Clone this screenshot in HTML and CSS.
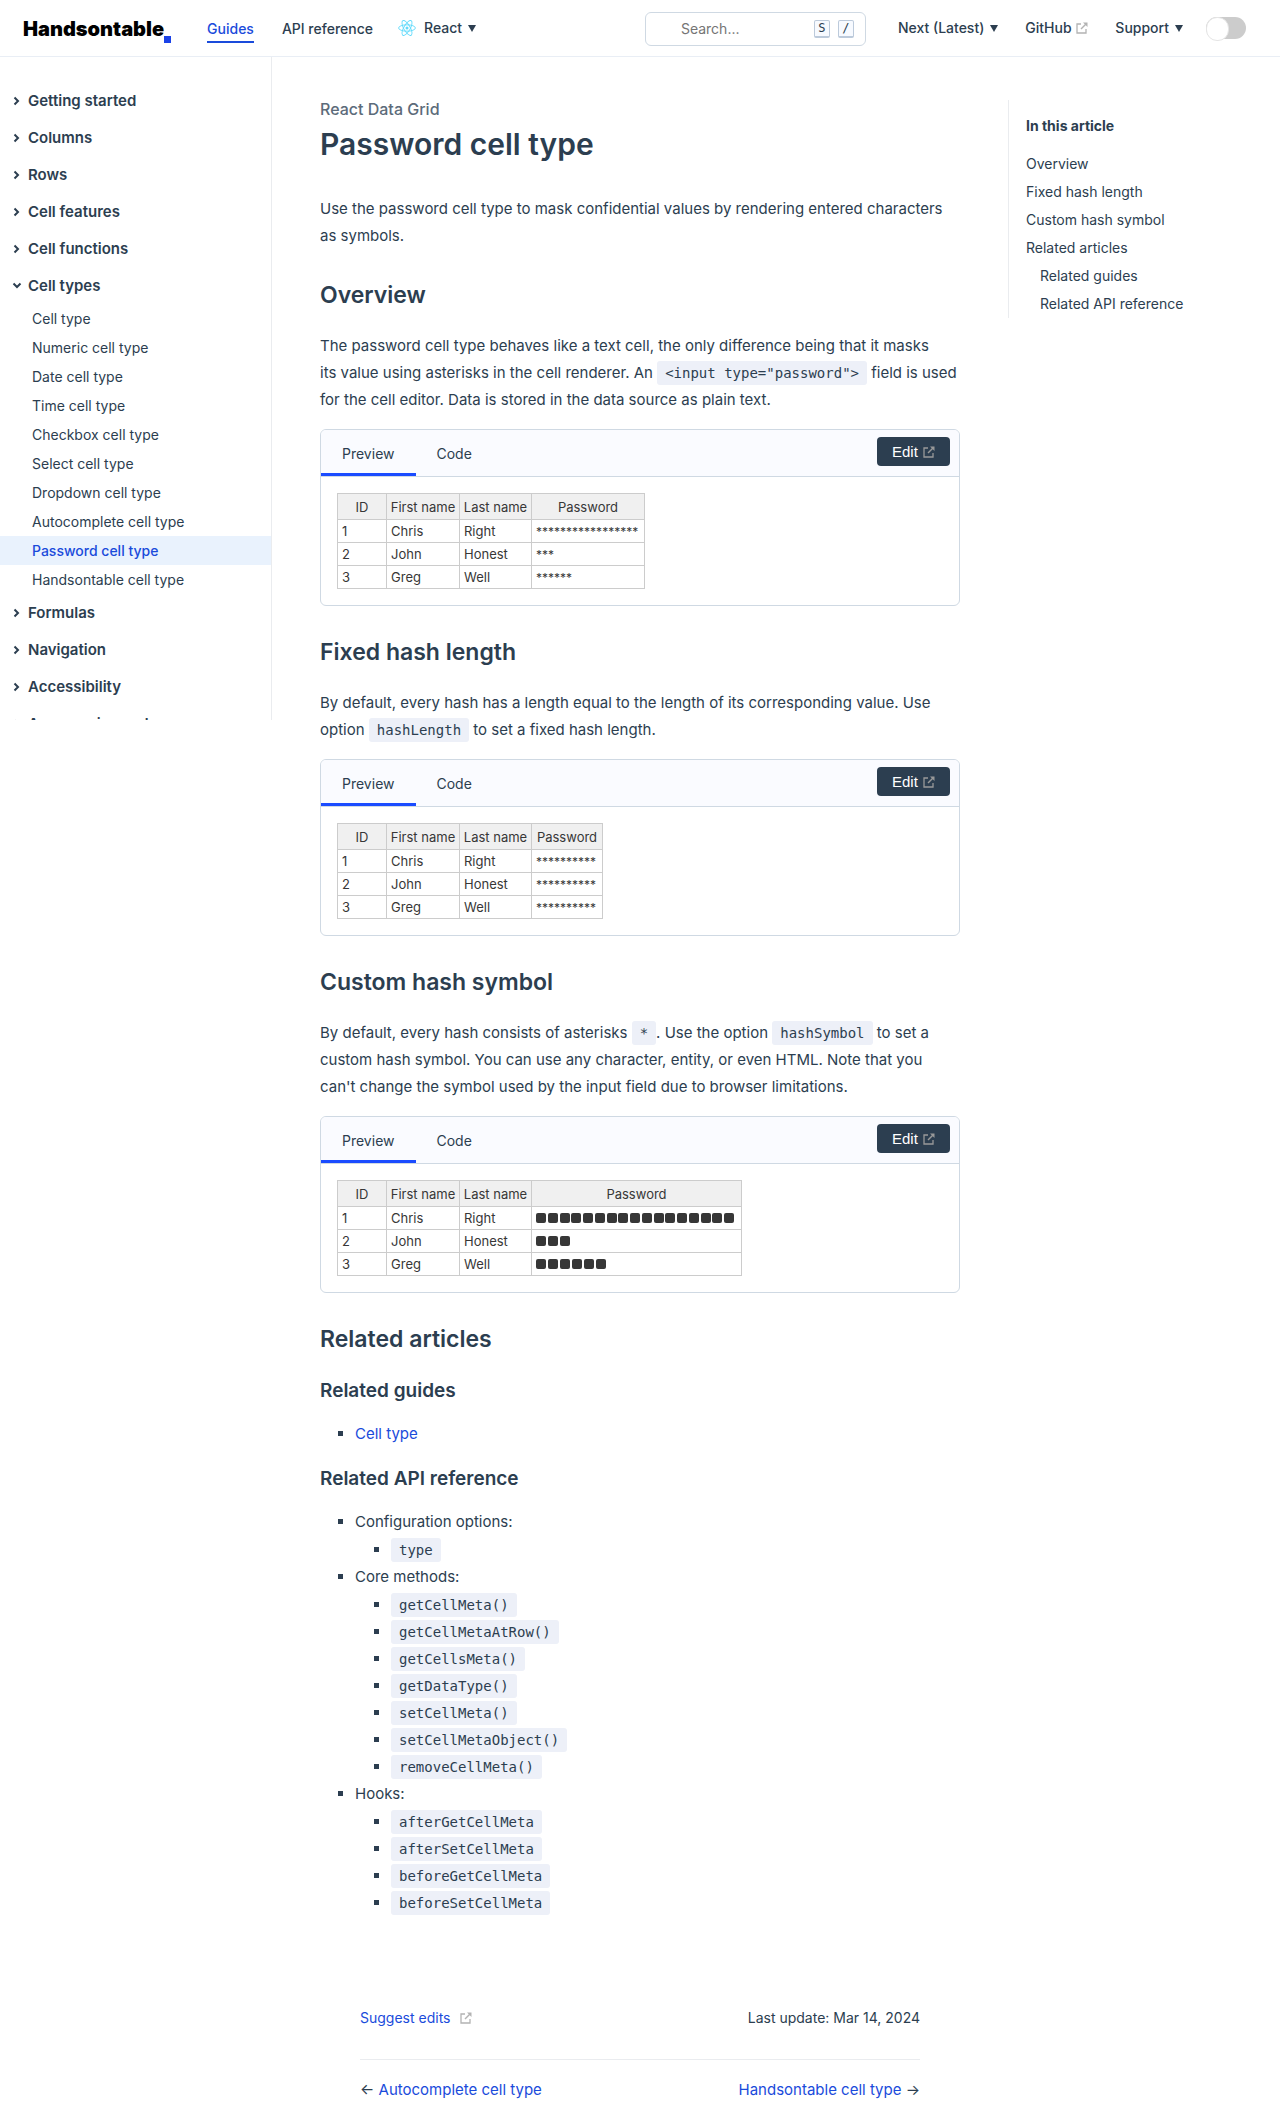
FILE: index.html
```html
<!DOCTYPE html>
<html lang="en">
<head>
<meta charset="utf-8">
<title>Password cell type - React Data Grid | Handsontable</title>
<meta name="viewport" content="width=device-width, initial-scale=1">
<link rel="stylesheet" href="styles.css">
</head>
<body>
<svg class="sprite" aria-hidden="true">
  <symbol id="ext" viewBox="0 0 12 12"><path d="M5 2H1V11H10V7" fill="none" stroke="currentColor" stroke-width="1.3"/><path d="M5 7L10.500 1.500" fill="none" stroke="currentColor" stroke-width="1.400"/><path d="M7 0.500H11.500V5Z" fill="currentColor"/></symbol>
  <symbol id="chev" viewBox="0 0 10 10"><path d="M2.500 1.500L6 5L2.500 8.500" fill="none" stroke="currentColor" stroke-width="2"/></symbol>
</svg>
<header class="topbar">
  <a class="logo" href="#">Handsontable<span class="logo-dot"></span></a>
  <nav class="nav-main">
    <a class="active" href="#">Guides</a>
    <a href="#">API reference</a>
    <button class="menu" type="button">
      <svg class="react" viewBox="0 0 18 20"><g fill="none" stroke="#61dafb" stroke-width="0.900"><ellipse cx="9" cy="10" rx="8.400" ry="3.200"/><ellipse cx="9" cy="10" rx="8.400" ry="3.200" transform="rotate(60 9 10)"/><ellipse cx="9" cy="10" rx="8.400" ry="3.200" transform="rotate(120 9 10)"/></g><circle cx="9" cy="10" r="1.500" fill="#61dafb"/></svg>
      React<span class="caret"></span></button>
  </nav>
  <div class="search">
    <input type="text" placeholder="Search..." aria-label="Search">
    <kbd>S</kbd><kbd>/</kbd>
  </div>
  <nav class="nav-side">
    <button class="menu" type="button">Next (Latest)<span class="caret"></span></button>
    <a href="#">GitHub <svg class="ext"><use href="#ext"/></svg></a>
    <button class="menu" type="button">Support<span class="caret"></span></button>
    <input class="toggle" type="checkbox" aria-label="Dark theme">
  </nav>
</header>
<div class="layout">
  <aside class="sidebar">
    <ul class="groups">
      <li><a href="#"><svg><use href="#chev"/></svg>Getting started</a></li>
      <li><a href="#"><svg><use href="#chev"/></svg>Columns</a></li>
      <li><a href="#"><svg><use href="#chev"/></svg>Rows</a></li>
      <li><a href="#"><svg><use href="#chev"/></svg>Cell features</a></li>
      <li><a href="#"><svg><use href="#chev"/></svg>Cell functions</a></li>
      <li class="open"><a href="#"><svg><use href="#chev"/></svg>Cell types</a>
        <ul class="pages">
          <li><a href="#">Cell type</a></li>
          <li><a href="#">Numeric cell type</a></li>
          <li><a href="#">Date cell type</a></li>
          <li><a href="#">Time cell type</a></li>
          <li><a href="#">Checkbox cell type</a></li>
          <li><a href="#">Select cell type</a></li>
          <li><a href="#">Dropdown cell type</a></li>
          <li><a href="#">Autocomplete cell type</a></li>
          <li><a class="current" href="#">Password cell type</a></li>
          <li><a href="#">Handsontable cell type</a></li>
        </ul>
      </li>
      <li><a href="#"><svg><use href="#chev"/></svg>Formulas</a></li>
      <li><a href="#"><svg><use href="#chev"/></svg>Navigation</a></li>
      <li><a href="#"><svg><use href="#chev"/></svg>Accessibility</a></li>
      <li><a href="#"><svg><use href="#chev"/></svg>Accessories and menus</a></li>
    </ul>
  </aside>
  <main class="content">
    <p class="framework">React Data Grid</p>
    <h1>Password cell type</h1>
    <p>Use the password cell type to mask confidential values by rendering entered characters as&nbsp;symbols.</p>

    <h2>Overview</h2>
    <p>The password cell type behaves like a text cell, the only difference being that it masks its&nbsp;value using asterisks in the cell renderer. An <code>&lt;input type="password"&gt;</code> field is used for&nbsp;the cell editor. Data is stored in the data source as plain text.</p>
    <section class="example">
      <div class="tabs"><button class="tab selected" type="button">Preview</button><button class="tab" type="button">Code</button><button class="edit" type="button">Edit <svg class="ext"><use href="#ext"/></svg></button></div>
      <table>
        <colgroup><col class="c-id"><col class="c-first"><col class="c-last"><col class="c-wide"></colgroup>
        <thead><tr><th>ID</th><th>First name</th><th>Last name</th><th>Password</th></tr></thead>
        <tbody>
          <tr><td>1</td><td>Chris</td><td>Right</td><td class="secret">*****************</td></tr>
          <tr><td>2</td><td>John</td><td>Honest</td><td class="secret">***</td></tr>
          <tr><td>3</td><td>Greg</td><td>Well</td><td class="secret">******</td></tr>
        </tbody>
      </table>
    </section>

    <h2>Fixed hash length</h2>
    <p>By default, every hash has a length equal to the length of its corresponding value. Use option <code>hashLength</code> to set a fixed hash length.</p>
    <section class="example">
      <div class="tabs"><button class="tab selected" type="button">Preview</button><button class="tab" type="button">Code</button><button class="edit" type="button">Edit <svg class="ext"><use href="#ext"/></svg></button></div>
      <table>
        <colgroup><col class="c-id"><col class="c-first"><col class="c-last"><col class="c-fixed"></colgroup>
        <thead><tr><th>ID</th><th>First name</th><th>Last name</th><th>Password</th></tr></thead>
        <tbody>
          <tr><td>1</td><td>Chris</td><td>Right</td><td class="secret">**********</td></tr>
          <tr><td>2</td><td>John</td><td>Honest</td><td class="secret">**********</td></tr>
          <tr><td>3</td><td>Greg</td><td>Well</td><td class="secret">**********</td></tr>
        </tbody>
      </table>
    </section>

    <h2>Custom hash symbol</h2>
    <p>By default, every hash consists of asterisks <code>*</code>. Use the option <code>hashSymbol</code> to set a custom hash symbol. You can use any character, entity, or even HTML. Note that you can't&nbsp;change the symbol used by the input field due to browser limitations.</p>
    <section class="example">
      <div class="tabs"><button class="tab selected" type="button">Preview</button><button class="tab" type="button">Code</button><button class="edit" type="button">Edit <svg class="ext"><use href="#ext"/></svg></button></div>
      <table>
        <colgroup><col class="c-id"><col class="c-first"><col class="c-last"><col class="c-custom"></colgroup>
        <thead><tr><th>ID</th><th>First name</th><th>Last name</th><th>Password</th></tr></thead>
        <tbody>
          <tr><td>1</td><td>Chris</td><td>Right</td><td><span class="hash full"><i></i><i></i><i></i><i></i><i></i><i></i><i></i><i></i><i></i><i></i><i></i><i></i><i></i><i></i><i></i><i></i><i></i></span></td></tr>
          <tr><td>2</td><td>John</td><td>Honest</td><td><span class="hash"><i></i><i></i><i></i></span></td></tr>
          <tr><td>3</td><td>Greg</td><td>Well</td><td><span class="hash"><i></i><i></i><i></i><i></i><i></i><i></i></span></td></tr>
        </tbody>
      </table>
    </section>

    <h2>Related articles</h2>
    <h3>Related guides</h3>
    <ul class="list"><li><a href="#">Cell type</a></li></ul>
    <h3>Related API reference</h3>
    <ul class="list">
      <li>Configuration options:
        <ul><li><a href="#"><code>type</code></a></li></ul></li>
      <li>Core methods:
        <ul>
          <li><a href="#"><code>getCellMeta()</code></a></li>
          <li><a href="#"><code>getCellMetaAtRow()</code></a></li>
          <li><a href="#"><code>getCellsMeta()</code></a></li>
          <li><a href="#"><code>getDataType()</code></a></li>
          <li><a href="#"><code>setCellMeta()</code></a></li>
          <li><a href="#"><code>setCellMetaObject()</code></a></li>
          <li><a href="#"><code>removeCellMeta()</code></a></li>
        </ul></li>
      <li>Hooks:
        <ul>
          <li><a href="#"><code>afterGetCellMeta</code></a></li>
          <li><a href="#"><code>afterSetCellMeta</code></a></li>
          <li><a href="#"><code>beforeGetCellMeta</code></a></li>
          <li><a href="#"><code>beforeSetCellMeta</code></a></li>
        </ul></li>
    </ul>
    <footer class="page-foot">
      <div class="meta"><a href="#">Suggest edits <svg class="ext"><use href="#ext"/></svg></a><span>Last update: Mar 14, 2024</span></div>
      <nav class="pager"><span>← <a href="#">Autocomplete cell type</a></span><span><a href="#">Handsontable cell type</a> →</span></nav>
    </footer>
  </main>
  <aside class="toc">
    <h4>In this article</h4>
    <ul>
      <li><a href="#">Overview</a></li>
      <li><a href="#">Fixed hash length</a></li>
      <li><a href="#">Custom hash symbol</a></li>
      <li><a href="#">Related articles</a>
        <ul><li><a href="#">Related guides</a></li><li><a href="#">Related API reference</a></li></ul></li>
    </ul>
  </aside>
</div>
</body>
</html>
```
FILE: styles.css
```css
* { box-sizing: border-box; }
body { margin: 0; background: #fff; color: #2c3e50; font: 15px/27px Inter, "Liberation Sans", sans-serif; }
a { color: #1a4bdb; text-decoration: none; }
ul { list-style: none; margin: 0; padding: 0; }
button { border: 0; background: none; padding: 0; color: inherit; font: inherit; cursor: pointer; }
.sprite { display: none; }
.ext { width: 12px; height: 12px; color: #b3b3b3; }

.topbar { display: flex; align-items: center; height: 57px; padding: 0 34px 0 23px; border-bottom: 1px solid #e9eef5; font-size: 14px; font-weight: 500; line-height: 20px; }
.topbar nav { display: flex; align-items: center; }
.topbar nav a { color: #2c3e50; }
.logo { display: flex; align-items: flex-end; padding-top: 2px; color: #000; font-size: 20px; font-weight: 900; line-height: 28px; }
.logo-dot { width: 7px; height: 7px; background: #1a42e8; }
.nav-main { gap: 28px; margin-left: 36px; }
.nav-main a { padding: 5px 0 2px; border-bottom: 2px solid transparent; }
.topbar .nav-main .active { color: #1a4bdb; border-color: #1a4bdb; }
.menu { display: flex; align-items: center; }
.react { width: 18px; height: 20px; margin-right: 8px; }
.nav-main .menu { margin-left: -3px; }
.caret { margin-left: 6px; border: 4px solid transparent; border-top: 7px solid #2c3e50; border-bottom: 0; }
.search { display: flex; align-items: center; gap: 8px; width: 221px; height: 34px; margin: 2px 0 0 auto; padding: 0 11px 0 35px; border: 1px solid #cfd9e3; border-radius: 6px; }
.search input { flex: 1; min-width: 0; padding: 0; border: 0; outline: 0; background: none; font: 14px/20px Inter, sans-serif; }
.search input::placeholder { color: #757575; }
kbd { width: 16px; height: 18px; border: 1px solid #bccadb; border-bottom-width: 2px; border-radius: 2px; background: #f7faff; font: 12px/15px "DejaVu Sans Mono", monospace; text-align: center; }
.nav-side { gap: 27px; margin-left: 32px; }
.nav-side .ext { margin-left: 1px; vertical-align: -1px; }
.toggle { position: relative; appearance: none; width: 40px; height: 22px; margin: 0 0 0 -4px; border-radius: 11px; background: #ccc; }
.toggle::before { content: ""; position: absolute; left: 0; top: 0; width: 21px; height: 22px; border: 1px solid #e5e5e5; border-radius: 11px; background: #fff; }

.layout { display: flex; align-items: flex-start; }
.sidebar { flex: 0 0 272px; height: calc(720px - 57px); padding-top: 25px; overflow: hidden; border-right: 1px solid #eaecef; }
.groups > li > a { display: flex; align-items: center; height: 37px; padding-left: 12px; color: #2c3e50; font-weight: 600; }
.groups > li > a svg { width: 10px; height: 10px; margin-right: 6px; }
.open > a svg { transform: rotate(90deg); }
.pages a { display: block; padding: 1px 0 1px 32px; color: #2c3e50; font-size: 14px; }
.pages .current { background: #e9f2fd; color: #1a4bdb; font-weight: 500; }

.content { flex: 0 1 640px; margin-left: 48px; padding-top: 39px; }
.framework { margin: 0; color: #5c6b7a; font-size: 16px; font-weight: 500; }
h1 { margin: 1px 0 31px; font-size: 30px; font-weight: 600; line-height: 40px; }
h2 { margin: 30px 0 21px; font-size: 23px; font-weight: 600; line-height: 32px; }
h3 { margin: 18px 0 15px; font-size: 19px; font-weight: 600; line-height: 28px; }
h2 + h3 { margin-top: 22px; }
p { margin: 0 0 16px; }
code { padding: 4px 8px; border-radius: 3px; background: #edf0f8; color: #2c3e50; font: 14px/20px "DejaVu Sans Mono", monospace; }
.example { margin: 16px 0 0; border: 1px solid #cfd9e3; border-radius: 6px; overflow: hidden; }
.tabs { display: flex; height: 47px; padding-right: 9px; border-bottom: 1px solid #cfd9e3; background: #fafbff; }
.tab { padding: 3px 21px 0; border-bottom: 3px solid transparent; font-size: 14px; }
.tab.selected { border-color: #1a4bff; }
.edit { width: 73px; height: 29px; margin: 7px 0 0 auto; border-radius: 4px; background: #2c3e50; color: #fff; font: 15px/29px "Liberation Sans", sans-serif; }
.edit .ext { margin-left: 1px; color: #999; vertical-align: -1px; }
table { margin: 16px; border-collapse: collapse; table-layout: fixed; width: 1px; color: #373737; font-size: 13px; line-height: 21px; white-space: nowrap; }
th, td { padding: 0 4px; border: 1px solid #ccc; font-weight: 400; text-align: left; }
td { height: 23px; }
th { height: 26px; padding: 2px 0 0; background: #f0f0f0; text-align: center; }
.secret { font-size: 12px; }
.c-id { width: 49px; }
.c-first { width: 73px; }
.c-last { width: 72px; }
.c-wide { width: 113px; }
.c-fixed { width: 71px; }
.c-custom { width: 210px; }
.hash { display: flex; gap: 2px; }
.hash i { width: 10px; height: 10px; border-radius: 2px; background: #373737; }
.hash.full { gap: 0; justify-content: space-between; width: 198px; }

.list li { list-style: square; }
.list { padding-left: 35px; }
.list ul { padding: 1px 0 0 36px; }
.page-foot { margin: 88px 40px 0; }
.meta { display: flex; justify-content: space-between; padding-bottom: 28px; border-bottom: 1px solid #eaecef; font-size: 14px; }
.meta .ext { margin-left: 6px; vertical-align: -1px; }
.pager { display: flex; justify-content: space-between; padding: 16px 0 20px; }

.toc { flex: 0 0 230px; margin: 43px 0 0 48px; padding: 12px 0 0 17px; border-left: 1px solid #eaecef; font-size: 14px; line-height: 28px; }
.toc h4 { margin: 0 0 10px; font-size: 14px; font-weight: 700; }
.toc a { color: #2c3e50; }
.toc ul ul { padding-left: 14px; }
```
